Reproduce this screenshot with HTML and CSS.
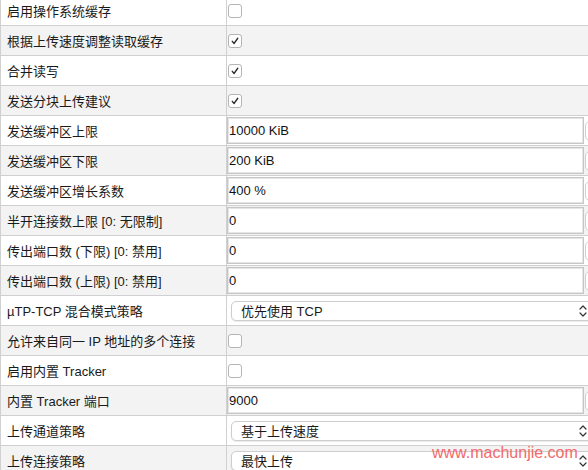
FILE: index.html
```html
<!DOCTYPE html>
<html lang="zh-CN">
<head>
<meta charset="utf-8">
<title>高级设置</title>
<link rel="stylesheet" href="styles.css">
</head>
<body>
<div class="table">
  <div class="row"><div class="label">启用操作系统缓存</div><div class="value"><span class="cb"></span></div></div>
  <div class="row alt"><div class="label">根据上传速度调整读取缓存</div><div class="value"><span class="cb"><svg viewBox="0 0 14 14"><path d="M3.8 7.4 L6 9.9 L10.2 3.8"/></svg></span></div></div>
  <div class="row"><div class="label">合并读写</div><div class="value"><span class="cb"><svg viewBox="0 0 14 14"><path d="M3.8 7.4 L6 9.9 L10.2 3.8"/></svg></span></div></div>
  <div class="row alt"><div class="label">发送分块上传建议</div><div class="value"><span class="cb"><svg viewBox="0 0 14 14"><path d="M3.8 7.4 L6 9.9 L10.2 3.8"/></svg></span></div></div>
  <div class="row"><div class="label">发送缓冲区上限</div><div class="value"><input class="field" type="text" value="10000 KiB"><span class="spin"></span></div></div>
  <div class="row alt"><div class="label">发送缓冲区下限</div><div class="value"><input class="field" type="text" value="200 KiB"><span class="spin"></span></div></div>
  <div class="row"><div class="label">发送缓冲区增长系数</div><div class="value"><input class="field" type="text" value="400 %"><span class="spin"></span></div></div>
  <div class="row alt"><div class="label">半开连接数上限 [0: 无限制]</div><div class="value"><input class="field" type="text" value="0"><span class="spin"></span></div></div>
  <div class="row"><div class="label">传出端口数 (下限) [0: 禁用]</div><div class="value"><input class="field" type="text" value="0"><span class="spin"></span></div></div>
  <div class="row alt"><div class="label">传出端口数 (上限) [0: 禁用]</div><div class="value"><input class="field" type="text" value="0"><span class="spin"></span></div></div>
  <div class="row"><div class="label">µTP-TCP 混合模式策略</div><div class="value"><div class="select"><span>优先使用 TCP</span><svg class="arrows" viewBox="0 0 8 14"><path d="M1 5 L4 2 L7 5 M1 9 L4 12 L7 9"/></svg></div></div></div>
  <div class="row alt"><div class="label">允许来自同一 IP 地址的多个连接</div><div class="value"><span class="cb"></span></div></div>
  <div class="row"><div class="label">启用内置 Tracker</div><div class="value"><span class="cb"></span></div></div>
  <div class="row alt"><div class="label">内置 Tracker 端口</div><div class="value"><input class="field" type="text" value="9000"><span class="spin"></span></div></div>
  <div class="row"><div class="label">上传通道策略</div><div class="value"><div class="select"><span>基于上传速度</span><svg class="arrows" viewBox="0 0 8 14"><path d="M1 5 L4 2 L7 5 M1 9 L4 12 L7 9"/></svg></div></div></div>
  <div class="row alt"><div class="label">上传连接策略</div><div class="value"><div class="select"><span>最快上传</span><svg class="arrows" viewBox="0 0 8 14"><path d="M1 5 L4 2 L7 5 M1 9 L4 12 L7 9"/></svg></div></div></div>
</div>
<div class="watermark">www.machunjie.com</div>
</body>
</html>
```
FILE: styles.css
```css
html, body {
  margin: 0;
  padding: 0;
  background: #fff;
  overflow: hidden;
}
body {
  width: 588px;
  height: 470px;
  position: relative;
  font-family: "Liberation Sans", "Noto Sans CJK SC", sans-serif;
  font-size: 13px;
  color: #1a1a1a;
}
.table {
  width: 700px;
  margin-top: -5px;
  border-top: 1px solid #d0d0d0;
  border-left: 1px solid #d0d0d0;
}
.row {
  display: grid;
  grid-template-columns: 226px 1fr;
  height: 30px;
  box-sizing: border-box;
  border-bottom: 1px solid #d0d0d0;
  background: #fff;
}
.row.alt {
  background: #f2f3f2;
}
.label {
  box-sizing: border-box;
  border-right: 1px solid #d0d0d0;
  padding-left: 6px;
  display: flex;
  align-items: center;
  white-space: nowrap;
  overflow: hidden;
}
.value {
  display: flex;
  align-items: center;
}
.cb {
  box-sizing: border-box;
  width: 14px;
  height: 14px;
  margin-left: 1px;
  border: 1px solid #b4b4b4;
  border-radius: 3px;
  background: #fff;
  display: flex;
}
.cb svg {
  width: 12px;
  height: 12px;
  fill: none;
  stroke: #2a2a2a;
  stroke-width: 1.6;
  stroke-linecap: round;
  stroke-linejoin: round;
}
.field {
  box-sizing: border-box;
  width: 357px;
  height: 27px;
  margin: 0;
  padding: 0 0 0 1px;
  border: 1px solid #c6c6c6;
  box-shadow: inset 0 0 0 1px #e6e6e6;
  background: #fff;
  font-family: "Liberation Sans", "Noto Sans CJK SC", sans-serif;
  font-size: 13px;
  color: #111;
  outline: none;
}
.spin {
  box-sizing: border-box;
  width: 30px;
  height: 20px;
  margin-left: 1px;
  border: 1px solid #cfcfcf;
  border-radius: 5px;
  background: #fff;
}
.select {
  box-sizing: border-box;
  width: 362px;
  height: 20px;
  margin-left: 4px;
  padding-left: 9px;
  padding-right: 5px;
  border: 1px solid #cdcdcd;
  border-radius: 5px;
  background: #fff;
  box-shadow: 0 1px 1px rgba(0, 0, 0, 0.08);
  display: flex;
  align-items: center;
  justify-content: space-between;
  white-space: nowrap;
}
.arrows {
  width: 8px;
  height: 14px;
  fill: none;
  stroke: #333;
  stroke-width: 1.2;
  stroke-linecap: round;
  stroke-linejoin: round;
}
.watermark {
  position: absolute;
  left: 432px;
  top: 444px;
  font-family: "Liberation Sans", sans-serif;
  font-size: 16px;
  line-height: 18px;
  color: #f26a6a;
  white-space: nowrap;
}
```
